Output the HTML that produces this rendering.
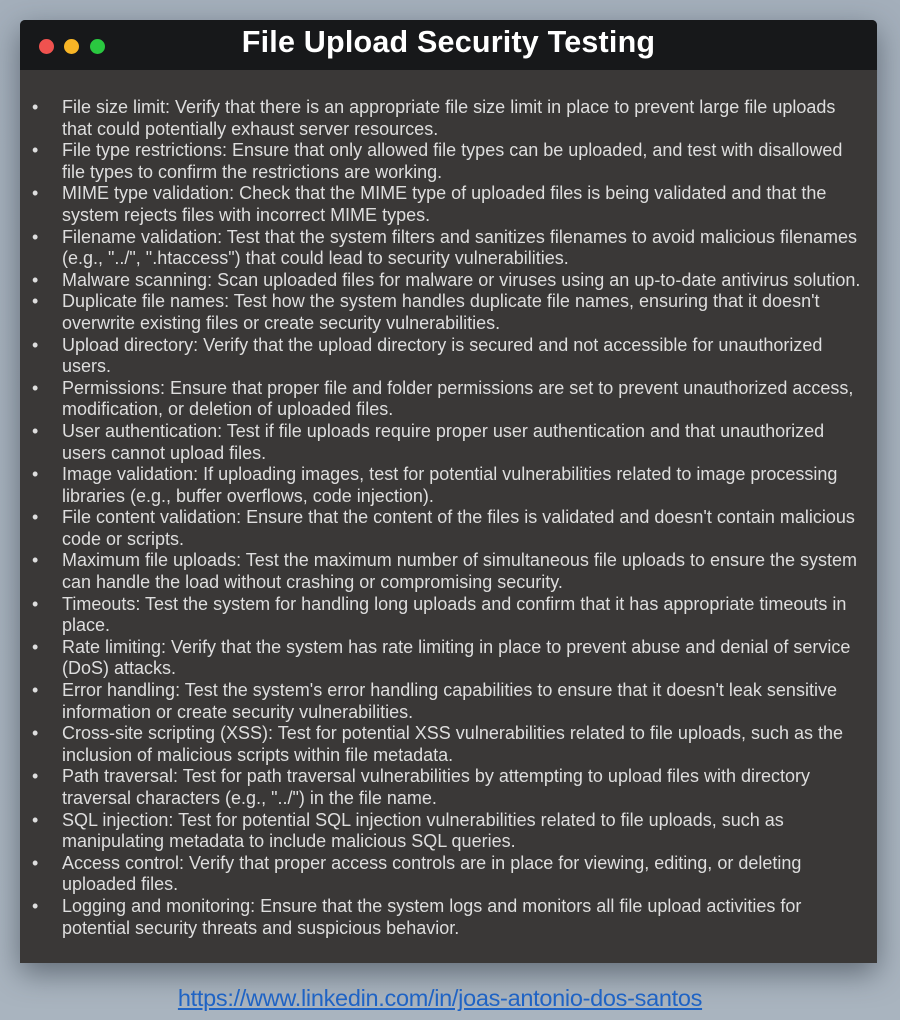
<!DOCTYPE html>
<html><head><meta charset="utf-8"><style>
html,body{margin:0;padding:0}
body{width:900px;height:1020px;background:linear-gradient(180deg,#a4afbb 0%,#a9b4bf 100%);position:relative;overflow:hidden;font-family:"Liberation Sans",Arial,sans-serif}
.win{position:absolute;left:20px;top:20px;width:857px;height:943px;background:#3a3837;border-radius:5px 5px 0 0;box-shadow:0 10px 30px rgba(40,50,60,.55)}
.hdr{height:50px;background:#17181a;border-radius:5px 5px 0 0;position:relative}
.dot{position:absolute;top:19px;width:15px;height:15px;border-radius:50%}
.title{position:absolute;left:0;right:0;top:5px;text-align:center;color:#fff;font-weight:bold;font-size:30.5px;letter-spacing:.2px}
ul{list-style:none;margin:0;padding:0;position:absolute;left:0;top:77px}
li{position:relative;padding-left:42px;color:#dedede;font-size:18px;line-height:21.6px;white-space:nowrap}
li:before{content:"•";position:absolute;left:12px;top:0;font-size:18px}
.link{position:absolute;left:0;width:880px;top:985px;text-align:center;color:#1f63c4;text-decoration:underline;font-size:23.5px;letter-spacing:-.3px}
</style></head><body>
<div class="win">
<div class="hdr">
<div class="dot" style="left:19px;background:#f0524f"></div>
<div class="dot" style="left:44px;background:#f8b526"></div>
<div class="dot" style="left:70px;background:#2ac840"></div>
<div class="title">File Upload Security Testing</div>
</div>
<ul>
<li>File size limit: Verify that there is an appropriate file size limit in place to prevent large file uploads<br>that could potentially exhaust server resources.</li>
<li>File type restrictions: Ensure that only allowed file types can be uploaded, and test with disallowed<br>file types to confirm the restrictions are working.</li>
<li>MIME type validation: Check that the MIME type of uploaded files is being validated and that the<br>system rejects files with incorrect MIME types.</li>
<li>Filename validation: Test that the system filters and sanitizes filenames to avoid malicious filenames<br>(e.g., "../", ".htaccess") that could lead to security vulnerabilities.</li>
<li>Malware scanning: Scan uploaded files for malware or viruses using an up-to-date antivirus solution.</li>
<li>Duplicate file names: Test how the system handles duplicate file names, ensuring that it doesn't<br>overwrite existing files or create security vulnerabilities.</li>
<li>Upload directory: Verify that the upload directory is secured and not accessible for unauthorized<br>users.</li>
<li>Permissions: Ensure that proper file and folder permissions are set to prevent unauthorized access,<br>modification, or deletion of uploaded files.</li>
<li>User authentication: Test if file uploads require proper user authentication and that unauthorized<br>users cannot upload files.</li>
<li>Image validation: If uploading images, test for potential vulnerabilities related to image processing<br>libraries (e.g., buffer overflows, code injection).</li>
<li>File content validation: Ensure that the content of the files is validated and doesn't contain malicious<br>code or scripts.</li>
<li>Maximum file uploads: Test the maximum number of simultaneous file uploads to ensure the system<br>can handle the load without crashing or compromising security.</li>
<li>Timeouts: Test the system for handling long uploads and confirm that it has appropriate timeouts in<br>place.</li>
<li>Rate limiting: Verify that the system has rate limiting in place to prevent abuse and denial of service<br>(DoS) attacks.</li>
<li>Error handling: Test the system's error handling capabilities to ensure that it doesn't leak sensitive<br>information or create security vulnerabilities.</li>
<li>Cross-site scripting (XSS): Test for potential XSS vulnerabilities related to file uploads, such as the<br>inclusion of malicious scripts within file metadata.</li>
<li>Path traversal: Test for path traversal vulnerabilities by attempting to upload files with directory<br>traversal characters (e.g., "../") in the file name.</li>
<li>SQL injection: Test for potential SQL injection vulnerabilities related to file uploads, such as<br>manipulating metadata to include malicious SQL queries.</li>
<li>Access control: Verify that proper access controls are in place for viewing, editing, or deleting<br>uploaded files.</li>
<li>Logging and monitoring: Ensure that the system logs and monitors all file upload activities for<br>potential security threats and suspicious behavior.</li>
</ul>
</div>
<div class="link">https://www.linkedin.com/in/joas-antonio-dos-santos</div>
</body></html>
